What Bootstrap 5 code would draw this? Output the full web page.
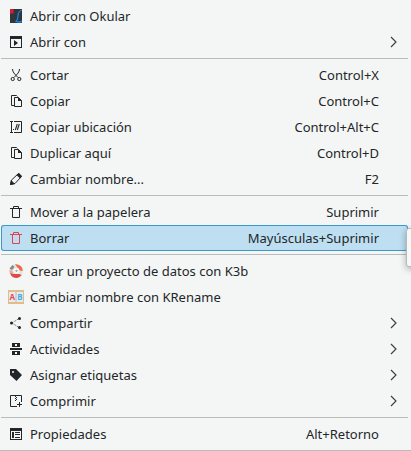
<!DOCTYPE html>
<html lang="es">
<head>
<meta charset="utf-8">
<meta name="viewport" content="width=device-width, initial-scale=1">
<title>Menú contextual</title>
<link href="https://cdn.jsdelivr.net/npm/bootstrap@5.3.0/dist/css/bootstrap.min.css" rel="stylesheet">
<style>
body{background:#f4f6f5;color:#232629;font:13px/26px "Noto Sans",sans-serif;height:451px;overflow:hidden}
.ctx-menu{height:451px;padding:3px 3px 0 1px;border-bottom:1px solid #b8bbba}
.ctx-item{height:26px;padding:0 29px 0 7px;white-space:nowrap;color:inherit;text-decoration:none}
.ctx-item svg{flex:none;display:block}
.ctx-item .glyph{width:16px;height:16px;margin-right:6px}
.ctx-item.has-sub{padding-right:9px}
.ctx-item.current{background:#bddff1;box-shadow:inset 0 0 0 1px #3b99cc;border-radius:3px}
.ctx-sep{height:7px;padding-top:3px}
.ctx-sep::before{content:"";display:block;height:1px;background:#b9bcbb}
.tip{left:406px;top:228px;width:20px;height:39px;background:#f7f8f8;border:1px solid #b5b9bb;border-radius:3px;box-shadow:0 2px 7px rgba(0,0,0,.3)}
</style>
<script src="https://cdn.jsdelivr.net/npm/bootstrap@5.3.0/dist/js/bootstrap.bundle.min.js"></script>
</head>
<body>
<svg class="d-none">
<symbol id="chev" viewBox="0 0 10 12"><path d="M2 1 7 6l-5 5" fill="none" stroke="#3b3e41" stroke-width="1.15"/></symbol>
<symbol id="copy" viewBox="0 0 16 16"><path d="M6 12.500H3.500v-10h5l1 1M6.500 4.500h4l3 3v6h-7z" fill="none" stroke="#232629"/><path d="M10 4v4h4z" fill="#232629"/></symbol>
<symbol id="trash" viewBox="0 0 16 16"><path d="M2 4.500h12M5.500 4V2.500h5V4M4.500 5v8.500h7V5" fill="none" stroke="currentColor"/></symbol>
</svg>
<main class="ctx-menu d-flex flex-column">
<a class="ctx-item d-flex align-items-center"><svg class="glyph" viewBox="0 0 16 16"><path d="M2 1h12v14H2z" fill="#30363b"/><path d="M2 1h3.500v5L4 5 2 6z" fill="#d51e35"/><path d="M14 2c-3 1-4 3-4 6 0 3-1 4.500-2 5.500 2 1 4 .5 6 0" fill="none" stroke="#1684df" stroke-width="1.300"/></svg><span>Abrir con Okular</span></a>
<a class="ctx-item has-sub d-flex align-items-center"><svg class="glyph" viewBox="0 0 16 16"><path fill-rule="evenodd" d="M2 2h12v12H2zM3 5v8h10V5z" fill="#232629"/><path d="M6 6v6l4-3z" fill="#232629"/></svg><span>Abrir con</span><svg class="ms-auto" width="10" height="12"><use href="#chev"/></svg></a>
<div class="ctx-sep"></div>
<a class="ctx-item d-flex align-items-center"><svg class="glyph" viewBox="0 0 16 16" fill="none" stroke="#232629"><path d="M4.500 2c0 3 2 5 5.500 8.500M11.500 2c0 3-2 5-5.500 8.500"/><circle cx="4.700" cy="12" r="1.600"/><circle cx="11.300" cy="12" r="1.600"/></svg><span>Cortar</span><span class="ms-auto">Control+X</span></a>
<a class="ctx-item d-flex align-items-center"><svg class="glyph"><use href="#copy"/></svg><span>Copiar</span><span class="ms-auto">Control+C</span></a>
<a class="ctx-item d-flex align-items-center"><svg class="glyph" viewBox="0 0 16 16"><path d="M2 2.500h3M2 13.500h3M3.500 3v10M6 2.500h7.500v11H6" fill="none" stroke="#232629"/><path d="M5 10h1v1H5z" fill="#232629"/><path d="M7.300 11 9.300 5M9.300 11l2-6" fill="none" stroke="#232629" stroke-width="1.100"/></svg><span>Copiar ubicación</span><span class="ms-auto">Control+Alt+C</span></a>
<a class="ctx-item d-flex align-items-center"><svg class="glyph"><use href="#copy"/></svg><span>Duplicar aquí</span><span class="ms-auto">Control+D</span></a>
<a class="ctx-item d-flex align-items-center"><svg class="glyph" viewBox="0 0 16 16"><path d="M2.500 13.500 3.500 9 10.500 2.500l3 3L7 12.500z" fill="none" stroke="#232629"/><path d="M8.500 4 11 2l3 3-2 2.500zM3 9l4 4-5 1z" fill="#232629"/><path d="m4.500 9.500 2 2" stroke="#f4f6f5"/></svg><span>Cambiar nombre...</span><span class="ms-auto">F2</span></a>
<div class="ctx-sep"></div>
<a class="ctx-item d-flex align-items-center"><svg class="glyph"><use href="#trash"/></svg><span>Mover a la papelera</span><span class="ms-auto">Suprimir</span></a>
<a class="ctx-item current d-flex align-items-center"><svg class="glyph" color="#da4453"><use href="#trash"/></svg><span>Borrar</span><span class="ms-auto">Mayúsculas+Suprimir</span></a>
<div class="ctx-sep"></div>
<a class="ctx-item d-flex align-items-center"><svg class="glyph" viewBox="0 0 16 16"><circle cx="8" cy="8" r="6.800" fill="#e3e5e5"/><path d="M7 1.300A6.800 6.800 0 0 1 14.800 8l-3.500-.5L9 4z" fill="#f26a45"/><path d="M2 10l4 1 5 0 2.800 1A6.800 6.800 0 0 1 3.500 13z" fill="#e04a42"/><path d="M1.500 5.500 4.500 2 6.500 4 4 7z" fill="#85898c"/><path d="M1.300 7 4 7.500 5.500 10 2 10z" fill="#f9a58f"/><circle cx="8.500" cy="7.800" r="3" fill="#f7f7f7"/><circle cx="8.500" cy="7.800" r="1.100" fill="#a3a7a9"/></svg><span>Crear un proyecto de datos con K3b</span></a>
<a class="ctx-item d-flex align-items-center"><svg class="glyph" viewBox="0 0 16 16"><path d="M0 1h16v14H0z" fill="#dfbd8c"/><path d="M1 3h6.500v10H1zM8.500 3H15v10H8.500z" fill="#e9ebeb"/><path d="M7 3h2v10H7z" fill="#d1d3d3"/><text x="1.500" y="11" font-family="Noto Sans" font-size="8" font-weight="700" fill="#df4a62">A</text><text x="9.300" y="11" font-family="Noto Sans" font-size="8" font-weight="700" fill="#3daee9">B</text></svg><span>Cambiar nombre con KRename</span></a>
<a class="ctx-item has-sub d-flex align-items-center"><svg class="glyph" viewBox="0 0 16 16"><path d="m4 8 7-4.500M4 8l7 4.500" fill="none" stroke="#232629" stroke-width=".8" stroke-dasharray="1 1"/><g fill="#232629"><circle cx="3.500" cy="8" r="1.500"/><circle cx="11.500" cy="3.500" r="1.500"/><circle cx="11.500" cy="12.500" r="1.500"/></g></svg><span>Compartir</span><svg class="ms-auto" width="10" height="12"><use href="#chev"/></svg></a>
<a class="ctx-item has-sub d-flex align-items-center"><svg class="glyph" viewBox="0 0 16 16"><path fill-rule="evenodd" d="M4 2h8v4H4zM7 3v2h2V3zM2 7h12v2H2zM4 10h8v4H4zM7 11v2h2v-2z" fill="#232629"/></svg><span>Actividades</span><svg class="ms-auto" width="10" height="12"><use href="#chev"/></svg></a>
<a class="ctx-item has-sub d-flex align-items-center"><svg class="glyph" viewBox="0 0 16 16"><path fill-rule="evenodd" d="M2 2h6l6 6-5.500 6L2 8zM5 4a1 1 0 1 0 0 2 1 1 0 0 0 0-2z" fill="#232629"/></svg><span>Asignar etiquetas</span><svg class="ms-auto" width="10" height="12"><use href="#chev"/></svg></a>
<a class="ctx-item has-sub d-flex align-items-center"><svg class="glyph" viewBox="0 0 16 16"><path d="M9 13.500H2.500v-11h11V9M9 11.500h5M11.500 9v5" fill="none" stroke="#232629"/><path d="M7 3h1v1H7zM8 4h1v1H8zM7 5h1v1H7zM8 6h1v1H8zM7 7h1v1H7z" fill="#232629"/></svg><span>Comprimir</span><svg class="ms-auto" width="10" height="12"><use href="#chev"/></svg></a>
<div class="ctx-sep"></div>
<a class="ctx-item d-flex align-items-center"><svg class="glyph" viewBox="0 0 16 16"><path fill-rule="evenodd" d="M2 2h12v12H2zM3 5v8h10V5zM4 6h2v6H4zM7 6h5v1H7zM7 8h5v1H7zM7 11h5v1H7z" fill="#232629"/></svg><span>Propiedades</span><span class="ms-auto">Alt+Retorno</span></a>
</main>
<div class="tip position-absolute"></div>
</body>
</html>
